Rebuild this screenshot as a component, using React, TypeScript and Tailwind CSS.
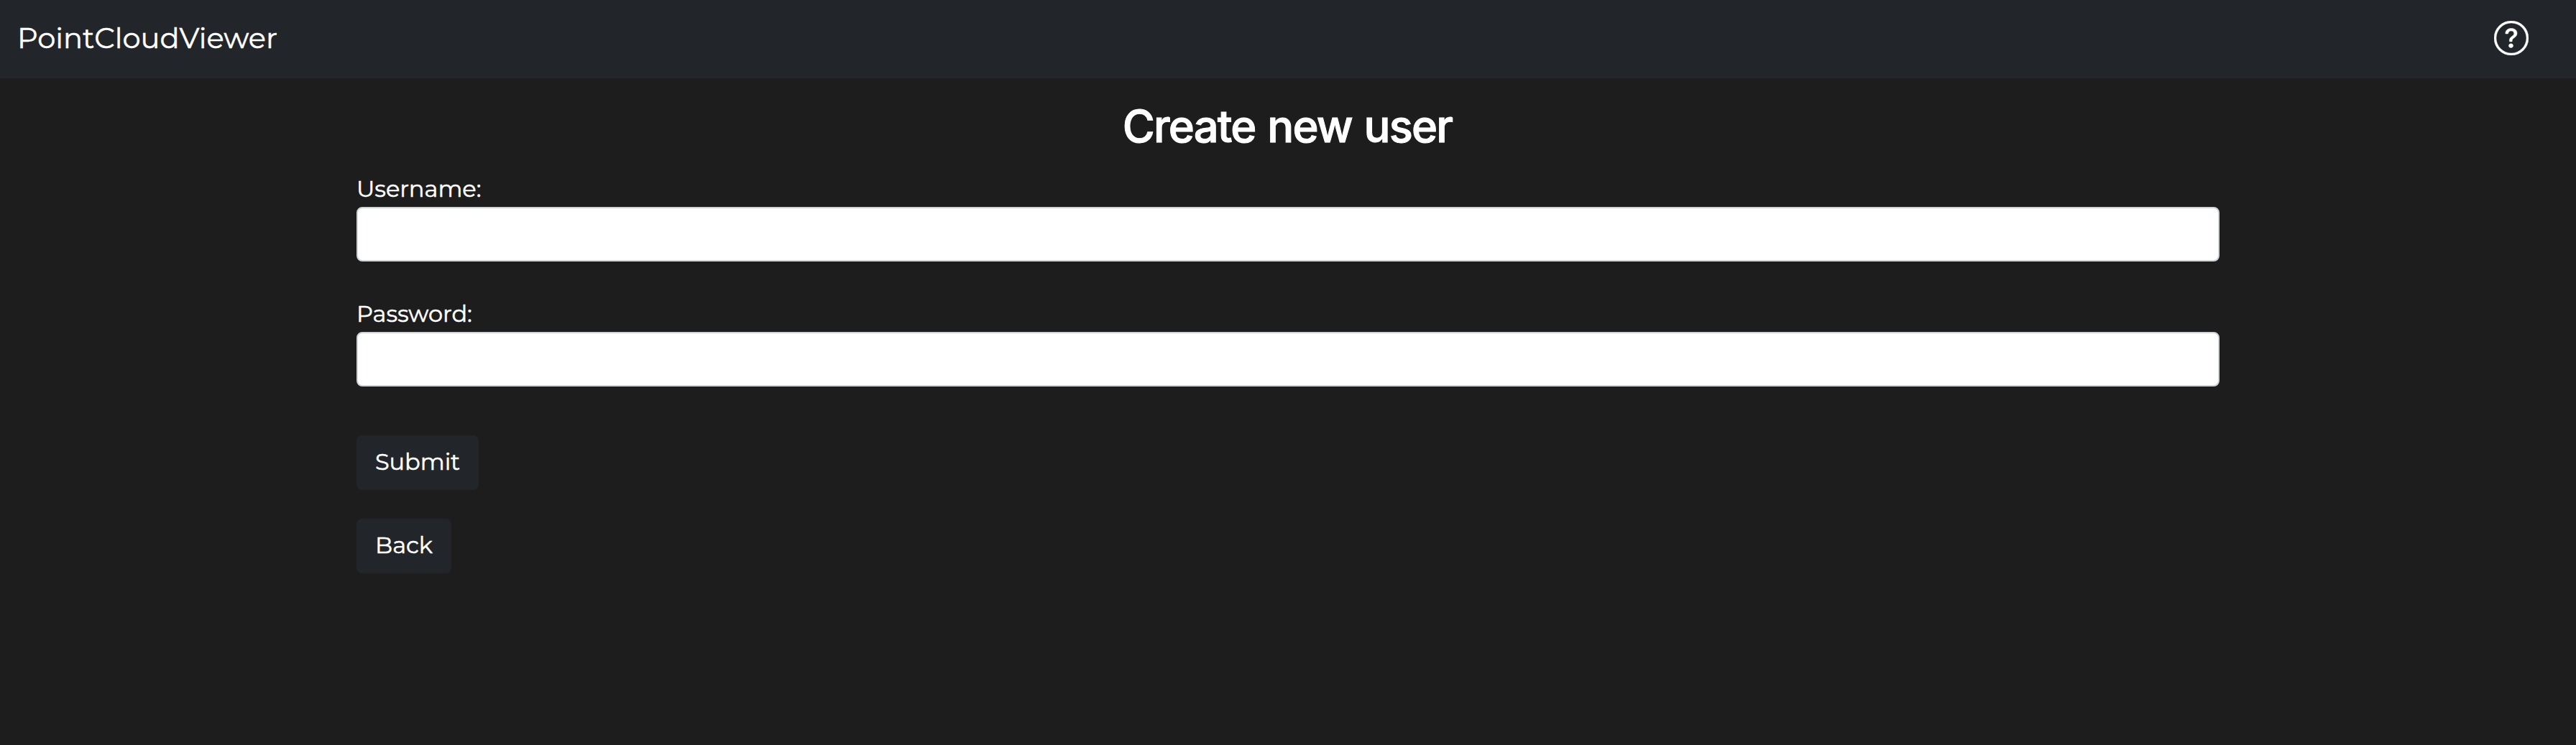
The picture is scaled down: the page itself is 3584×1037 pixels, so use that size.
import { BsQuestionCircle } from "react-icons/bs";

function Field({ id, label, type }: { id: string; label: string; type: string }) {
  return (
    <div className="flex flex-col">
      <label htmlFor={id} className="h-12 self-start whitespace-nowrap leading-[46px]">
        {label}
      </label>
      <input
        id={id}
        type={type}
        className="h-[76px] w-full rounded-lg border-2 border-[#ced4da] bg-white px-6 text-black outline-none"
      />
    </div>
  );
}

export default function App() {
  return (
    <div className="min-h-[1037px] bg-[#1d1d1d] font-['Montserrat','Inter',sans-serif] text-[32px] text-white [-webkit-text-stroke:0.5px_white]">
      <header className="flex h-[109px] items-center justify-between bg-[#22262a] pb-[3px] pl-6 pr-[66px]">
        <span className="text-[40px] leading-[60px]">PointCloudViewer</span>
        <BsQuestionCircle className="size-12" strokeWidth={0.15} />
      </header>
      <main className="mx-auto flex w-[2592px] flex-col">
        <h1 className="mt-7 h-[103px] pr-0.5 text-center font-['Inter',sans-serif] text-[61.5px] font-medium leading-[77px] tracking-[-1.8px] [-webkit-text-stroke:1px_white] [word-spacing:2px]">
          Create new user
        </h1>
        <form className="flex flex-col">
          <Field id="username" label="Username:" type="text" />
          <div className="h-[50px]" />
          <Field id="password" label="Password:" type="password" />
          <button type="button" className="mt-[68px] h-[76px] w-[170px] rounded-lg bg-[#22262a] pb-[3px]">
            Submit
          </button>
          <button type="button" className="mt-10 h-[76px] w-[132px] rounded-lg bg-[#22262a] pb-[3px]">
            Back
          </button>
        </form>
      </main>
    </div>
  );
}
